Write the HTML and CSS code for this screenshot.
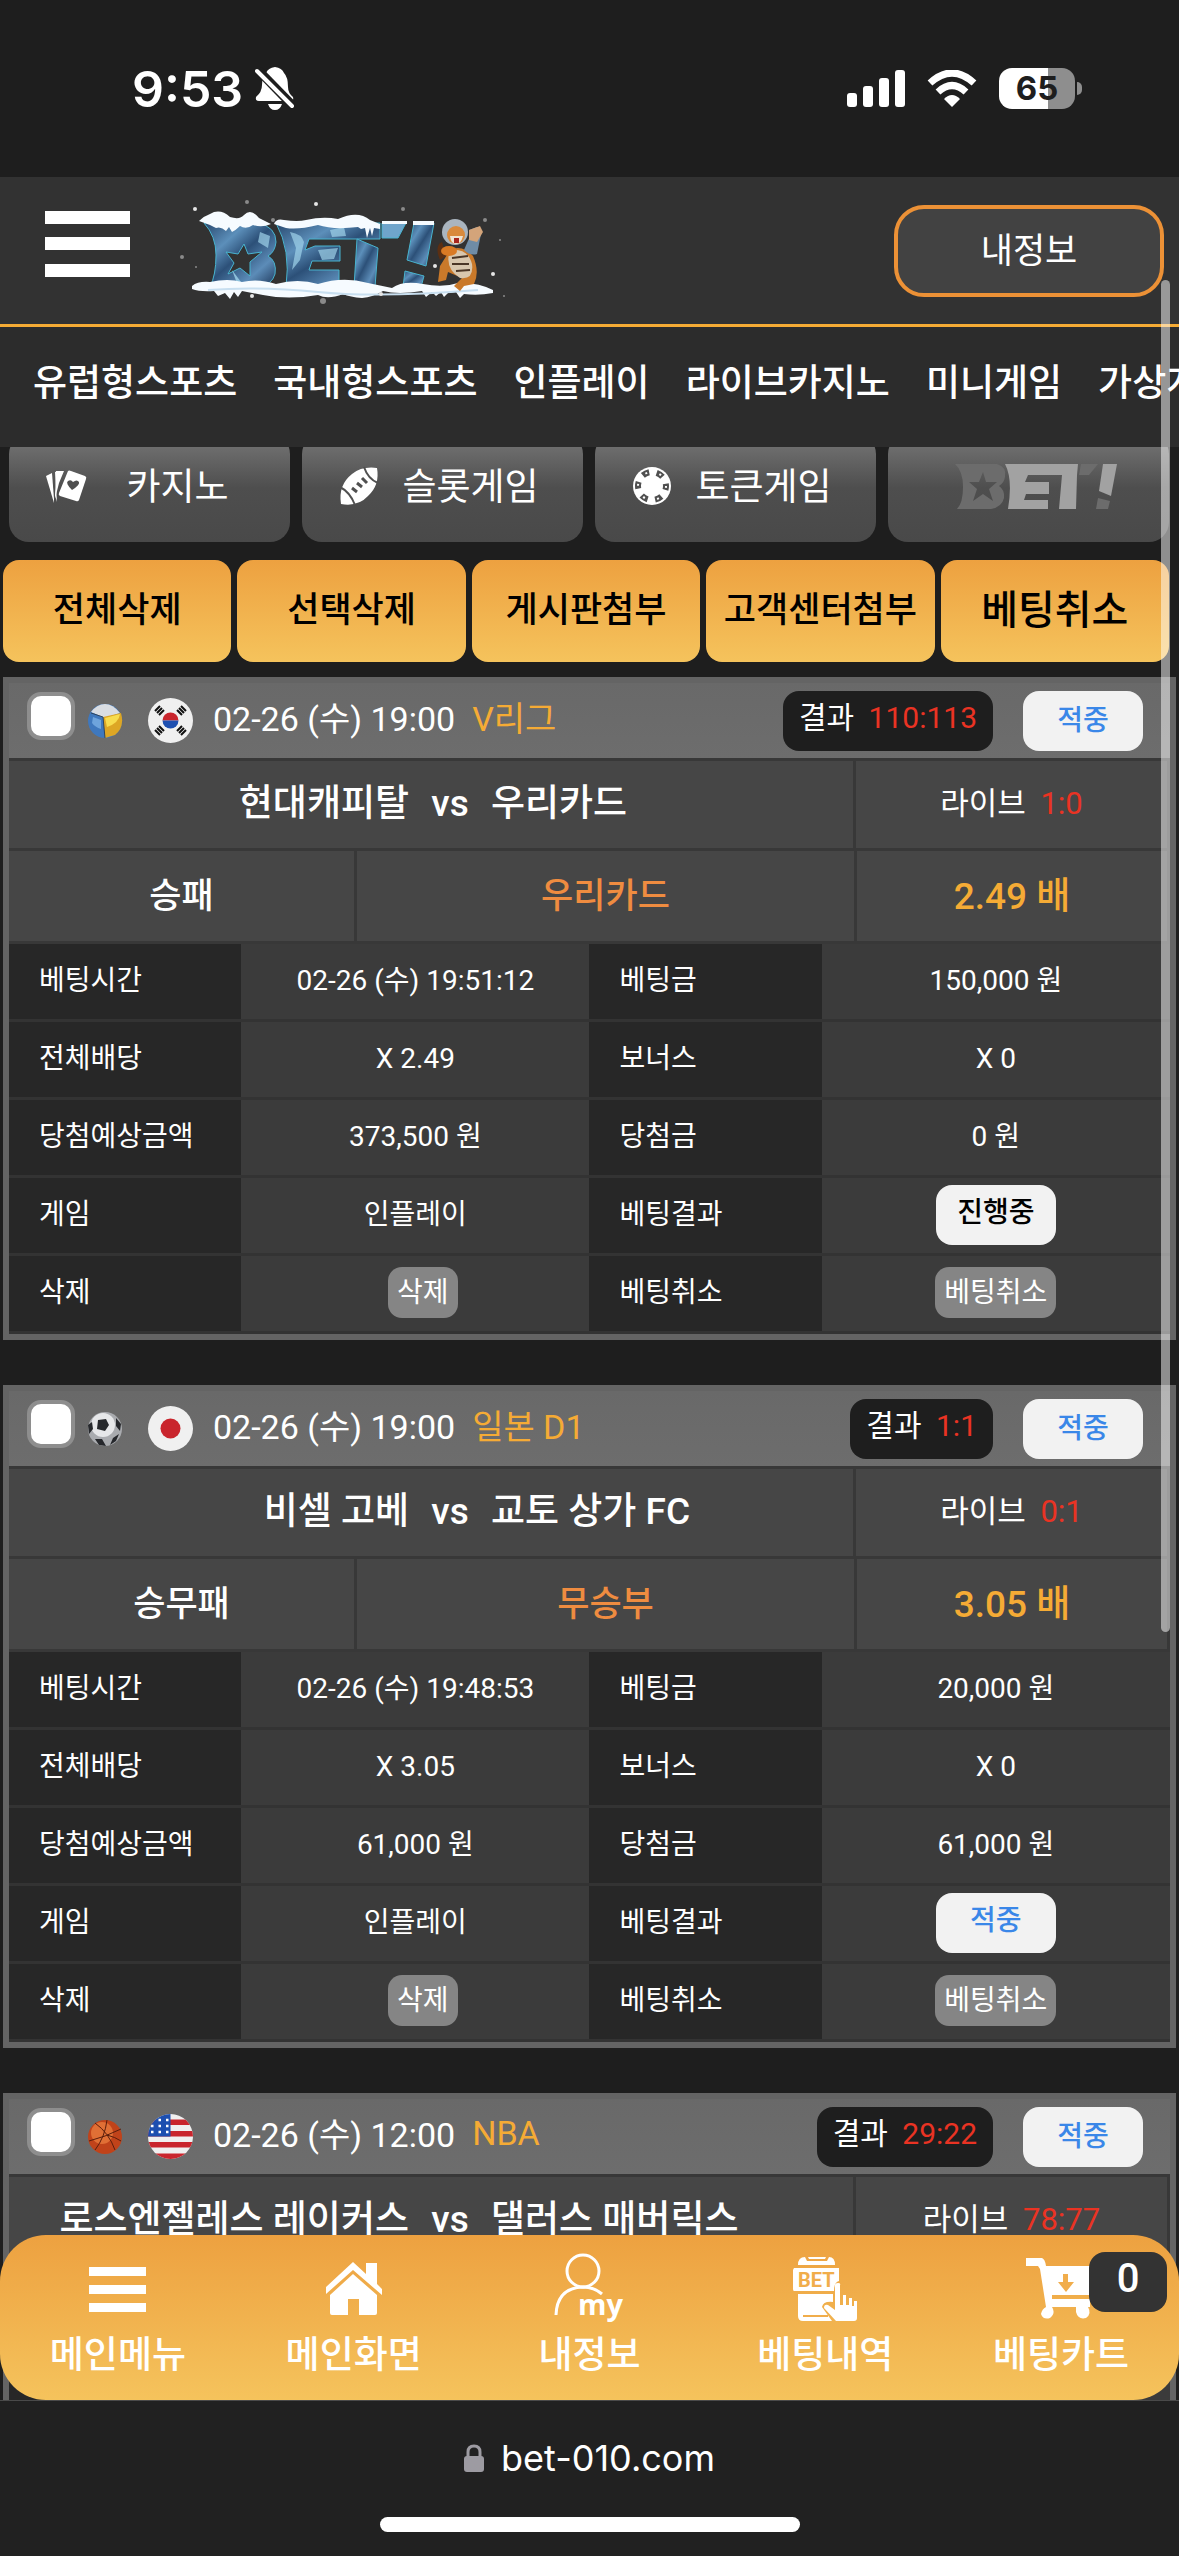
FILE: index.html
```
<!DOCTYPE html>
<html lang="ko">
<head>
    <meta charset="UTF-8">
    <meta name="viewport" content="width=device-width, initial-scale=1.0">
    <title>베팅내역</title>
    <link rel="stylesheet" href="styles.css">
</head>
<body>

    <!-- Shared icons -->
    <svg class="sprite" aria-hidden="true">
        <symbol id="ball-volley" viewBox="0 0 36 36">
            <circle cx="18" cy="18" r="17" fill="#3f78bd"/>
            <path d="M4 9Q10 1 18 1T33 10L18 15Z" fill="#d9dde2"/>
            <path d="M16 14 34 10Q38 24 28 32L18 35Z" fill="#dda624"/>
            <path d="M18 15 33 11Q32 20 20 24Z" fill="#f7dc4e"/>
            <path d="M4 10 16 14 18 35" fill="none" stroke="#2d4560" stroke-width="1"/>
            <path d="M6 14 14 17V26Q8 24 5 20Z" fill="#6ea4dc"/>
        </symbol>
        <symbol id="ball-soccer" viewBox="0 0 36 36">
            <circle cx="18" cy="18" r="17" fill="#a9abaf"/>
            <circle cx="16" cy="14" r="12" fill="#e6e7e9"/>
            <path d="M11 9 19 8 22 14 18 20 10 18ZM1 14 5 11 6 18 2 23ZM29 7 34 13 33 20 29 15ZM8 28 15 28 19 35 12 34ZM26 27 32 23 29 30 23 34Z" fill="#26282c"/>
        </symbol>
        <symbol id="ball-basket" viewBox="0 0 36 36">
            <circle cx="18" cy="18" r="17" fill="#c0431a"/>
            <circle cx="15" cy="14" r="11" fill="#e06f35"/>
            <path d="M2 22Q18 18 34 10M8 4Q22 14 28 31M20 1Q18 18 8 31M20 16Q28 18 34 22" fill="none" stroke="#5a1d0c" stroke-width="1"/>
        </symbol>
        <symbol id="flag-kr" viewBox="0 0 45 45">
            <circle cx="22.5" cy="22.5" r="22.5" fill="#f0f0f0"/>
            <path d="M14.5 22.5a8 8 0 0 1 16 0Z" fill="#c9252d"/>
            <path d="M14.5 22.5a8 8 0 0 0 16 0Z" fill="#1d4fb0"/>
            <path d="M7 13 12 8M9 15 14 10M11 17 16 12M31 10 36 15M29 12 34 17M33 8 38 13M7 32 12 37M9 30 14 35M11 28 16 33M29 33 34 28M31 35 36 30M33 37 38 32" stroke="#111" stroke-width="2"/>
        </symbol>
        <symbol id="flag-jp" viewBox="0 0 45 45">
            <circle cx="22.5" cy="22.5" r="22.5" fill="#f0f0f0"/>
            <circle cx="22.5" cy="22.5" r="10" fill="#c9252d"/>
        </symbol>
        <symbol id="flag-us" viewBox="0 0 45 45">
            <clipPath id="round"><circle cx="22.5" cy="22.5" r="22.5"/></clipPath>
            <g clip-path="url(#round)">
                <path d="M0 0H45V45H0Z" fill="#f0f0f0"/>
                <path d="M0 5.5H45V11H0ZM0 17H45V22.5H0ZM0 28H45V33.5H0ZM0 39.5H45V45H0Z" fill="#c9252d"/>
                <path d="M0 0H22.5V22.5H0Z" fill="#1d4fb0"/>
                <path d="M3 6H22M3 12H22M3 18H22" stroke="#fff" stroke-width="2.5" stroke-dasharray="2.5 5"/>
            </g>
        </symbol>
        <symbol id="bars" viewBox="0 0 57 45">
            <path d="M0 0H57V9H0ZM0 18H57V27H0ZM0 36H57V45H0Z" fill="#fff"/>
        </symbol>
    </svg>

    <!-- Phone status -->
    <div class="status">
        <div class="status-left">
            <span class="clock">9:53</span>
            <svg class="bell" viewBox="0 0 40 43">
                <path d="M20 0Q27 1 29 6 33 10 33 20 33 26 38 30 39 34 36 34H4Q0 34 1 30 7 25 7 18 7 10 11 6 13 1 20 0ZM13 37H27Q25 43 20 43T13 37Z" fill="#fff"/>
                <path d="M3 3 38 39" stroke="#1e1e1e" stroke-width="9"/>
                <path d="M2 4 37 39" stroke="#fff" stroke-width="4" stroke-linecap="round"/>
            </svg>
        </div>
        <div class="status-right">
            <svg class="signal" viewBox="0 0 58 37">
                <g fill="#fff">
                    <rect y="23" width="10" height="14" rx="3"/>
                    <rect x="16" y="16" width="10" height="21" rx="3"/>
                    <rect x="32" y="8" width="10" height="29" rx="3"/>
                    <rect x="48" width="10" height="37" rx="3"/>
                </g>
            </svg>
            <svg class="wifi" viewBox="0 0 50 37">
                <path d="M3 13Q25-7 47 13" fill="none" stroke="#fff" stroke-width="7"/>
                <path d="M11 22Q25 9 39 22" fill="none" stroke="#fff" stroke-width="7"/>
                <path d="M17 29Q25 21 33 29L25 37Z" fill="#fff"/>
            </svg>
            <span class="battery">65</span>
        </div>
    </div>

    <div class="page">
        <header class="header">
            <button class="menu-btn" aria-label="메뉴">
                <svg viewBox="0 0 85 66"><path d="M0 0H85V13H0ZM0 26H85V39H0ZM0 53H85V66H0Z" fill="#fff"/></svg>
            </button>
            <a class="logo" href="#" aria-label="BET!">
                <svg viewBox="0 0 340 110">
                    <defs>
                        <linearGradient id="ice" x1="0" y1="0" x2="1" y2="1">
                            <stop offset="0" stop-color="#27476d"/>
                            <stop offset=".3" stop-color="#5c8fba"/>
                            <stop offset=".5" stop-color="#2c5078"/>
                            <stop offset=".75" stop-color="#5c8cb8"/>
                            <stop offset="1" stop-color="#1b3355"/>
                        </linearGradient>
                    </defs>
                    <g fill="url(#ice)" stroke="#48b4cf">
                        <path d="M26 23H80Q98 27 98 42 97 52 90 56 99 61 97 74 94 85 80 87H32Q38 75 38 55 38 36 26 23ZM66 44 60 54 48 52 56 63 50 74 62 68 72 76 72 62 84 52 70 54Z" fill-rule="evenodd"/>
                        <path d="M98 23H202V39H131L127 50 137 46H162V61H134L131 70H161V87H108Q113 50 98 23Z"/>
                        <path d="M179 39 200 48 197 87H176Z"/>
                        <path d="M204 23H228L220 38H204Z" fill="#6fa5cc"/>
                        <path d="M236 23H256L248 66 229 60Z"/>
                        <path d="M227 71 246 76 243 87H225Z"/>
                    </g>
                    <g fill="#9fd3ea">
                        <path d="M112 32Q124 34 126 42L122 60 114 70 118 48Z" opacity=".7"/>
                        <path d="M140 50 160 48 156 59 144 60ZM152 30 166 27 168 36 154 37ZM82 32 92 36 90 48 80 42Z" opacity=".7"/>
                        <path d="M54 70 66 86H60Z" opacity=".8"/>
                    </g>
                    <g fill="#f6fbff">
                        <path d="M21 21Q26 16 32 14 42 8 52 17 62 20 66 15 73 8 81 18L93 24Q84 28 75 25 68 30 62 26 58 30 54 32L51 27 48 31Q43 26 38 28L32 25Z"/>
                        <path d="M96 24Q98 18 106 20 120 22 128 20 145 16 160 19 180 10 192 20L202 24V29L196 28 194 36 192 28 189 38 187 28 183 29 180 27Q155 30 140 25 120 30 108 28Z"/>
                        <path d="M14 86Q20 81 32 82 50 78 64 82 80 78 98 84 120 78 140 84 165 76 190 83L214 88Q225 80 245 84 265 88 280 83 300 82 315 90V93Q300 96 286 94L282 98 278 92 270 93 266 97 263 92 258 96 254 92 248 97 244 91Q220 95 205 91 195 97 184 98 172 97 165 94 150 100 140 95 110 100 85 95L64 91 60 97 56 92 52 99 47 93 40 96 36 91Q22 92 14 89Z"/>
                        <path d="M204 21H229V24H204ZM235 21H256V25H235Z"/>
                    </g>
                    <path d="M30 90Q80 86 140 92T300 90" fill="none" stroke="#c8dff0" stroke-width="2"/>
                    <!-- tiger -->
                    <path d="M262 60Q256 46 264 42L268 56Z" fill="#5b2f12"/>
                    <path d="M272 50Q284 44 295 56 302 72 296 84L286 86 282 91 276 86 284 78 270 72 268 80 260 82 262 66Z" fill="#c9792a"/>
                    <path d="M272 50Q290 48 294 64 296 80 282 78 266 68 272 50Z" fill="#d8c7ae"/>
                    <path d="M274 58 290 56M274 64 291 64M278 71 292 70" stroke="#4a3626" stroke-width="2"/>
                    <circle cx="277" cy="32" r="13" fill="#aab5bf"/>
                    <circle cx="278" cy="35" r="9" fill="#d98a3c"/>
                    <path d="M272 36H285Q283 44 278 44T272 36Z" fill="#f0e4d2"/>
                    <path d="M276 38H281V43H276Z" fill="#a8261e"/>
                    <path d="M286 50 293 34 291 30 299 27 303 34 299 54Q292 56 286 50Z" fill="#6f8ca6"/>
                    <path d="M291 30 302 26 305 32 299 42 291 40Z" fill="#d3a47a"/>
                    <ellipse cx="271" cy="51" rx="8" ry="5" fill="#d97a24"/>
                    <g fill="#e6e6e6">
                        <circle cx="17" cy="9" r="2"/><circle cx="138" cy="4" r="2"/><circle cx="257" cy="66" r="2"/><circle cx="315" cy="74" r="2"/><circle cx="74" cy="96" r="2"/><circle cx="203" cy="94" r="2"/>
                    </g>
                    <g fill="#8a8a8a">
                        <circle cx="69" cy="2" r="2"/><circle cx="225" cy="9" r="2"/><circle cx="307" cy="20" r="2"/><circle cx="322" cy="40" r="1"/><circle cx="4" cy="57" r="2"/><circle cx="18" cy="67" r="1"/><circle cx="145" cy="101" r="3"/><circle cx="326" cy="96" r="1"/><circle cx="95" cy="20" r="2"/>
                    </g>
                </svg>
            </a>
            <button class="my-btn">내정보</button>
        </header>

        <nav class="nav">
            <a href="#">유럽형스포츠</a>
            <a href="#">국내형스포츠</a>
            <a href="#">인플레이</a>
            <a href="#">라이브카지노</a>
            <a href="#">미니게임</a>
            <a href="#">가상게임</a>
        </nav>

        <main class="content">
            <div class="quick">
                <a class="quick-btn" href="#">
                    <svg class="quick-icon" viewBox="0 0 42 42">
                        <g fill="#fff">
                            <path d="M1 11 7 8 9 34 9 38Z"/>
                            <path d="M10 7 14 6 10 30 12 37Z"/>
                            <path d="M11 6 19 6 14 18 10 34Z"/>
                            <path d="M23 6Q24 5 26 6L40 11Q42 12 41 14L34 35Q33 37 31 36L15 31Q13 30 14 28Z"/>
                        </g>
                        <path d="M27 25Q20 18 23 16 26 14 28 17 32 14 34 17 35 20 27 25Z" fill="#4f4f4f"/>
                    </svg>
                    <span>카지노</span>
                </a>
                <a class="quick-btn" href="#">
                    <svg class="quick-icon" viewBox="0 0 42 42">
                        <path d="M3 39Q0 20 14 9 24 1 39 3 42 20 30 31 20 42 3 39Z" fill="#fff"/>
                        <path d="M2 22Q12 27 17 40M26 2Q30 14 40 18" fill="none" stroke="#505050" stroke-width="2"/>
                        <path d="M14 23 19 27M19 18 24 22M24 13 29 18" stroke="#505050" stroke-width="3"/>
                    </svg>
                    <span>슬롯게임</span>
                </a>
                <a class="quick-btn" href="#">
                    <svg class="quick-icon" viewBox="0 0 42 42">
                        <circle cx="21" cy="21" r="19" fill="#fff"/>
                        <circle cx="21" cy="21" r="14" fill="none" stroke="#505050" stroke-width="6" stroke-dasharray="7 7.66" stroke-dashoffset="3"/>
                        <circle cx="21" cy="21" r="14" fill="none" stroke="#fff" stroke-width="2" stroke-dasharray="2 12.66" stroke-dashoffset="0"/>
                    </svg>
                    <span>토큰게임</span>
                </a>
                <a class="quick-btn" href="#" aria-label="BET!">
                    <svg class="quick-logo" viewBox="0 0 162 46">
                        <path d="M0 1H42Q52 4 50 14 49 20 44 23 50 27 49 35 47 44 36 46H2Q8 40 8 24 8 8 0 1ZM28 9 24 19 14 19 22 26 18 38 28 31 38 38 34 26 42 19 31 19Z" fill="#6c6c6c" fill-rule="evenodd"/>
                        <path d="M50 1H123L122 12 121 46H104L107 12H73L70 19H94V31H71L69 37H93V46H53Q58 16 50 1Z" fill="#a2a2a2"/>
                        <path d="M126 1H143L134 12H124Z" fill="#6c6c6c"/>
                        <path d="M148 1H162L156 33 144 28Z" fill="#a2a2a2"/>
                        <path d="M143 35 155 38 153 46H141Z" fill="#6c6c6c"/>
                    </svg>
                </a>
            </div>

            <div class="actions">
                <button>전체삭제</button>
                <button>선택삭제</button>
                <button>게시판첨부</button>
                <button>고객센터첨부</button>
                <button class="strong">베팅취소</button>
            </div>

            <article class="bet">
                <div class="bet-head">
                    <input type="checkbox" aria-label="V리그 선택">
                    <svg class="ball"><use href="#ball-volley"/></svg>
                    <svg class="flag"><use href="#flag-kr"/></svg>
                    <span class="date">02-26 (수) 19:00</span>
                    <span class="league">V리그</span>
                    <span class="result">결과 <b>110:113</b></span>
                    <button class="state hit">적중</button>
                </div>
                <div class="bet-row match">
                    <div class="teams"><span>현대캐피탈</span><span>vs</span><span>우리카드</span></div>
                    <div class="live">라이브 <b>1:0</b></div>
                </div>
                <div class="bet-row pick">
                    <div>승패</div>
                    <div class="choice">우리카드</div>
                    <div class="odds">2.49 배</div>
                </div>
                <table class="detail">
                    <tr><th>베팅시간</th><td>02-26 (수) 19:51:12</td><th>베팅금</th><td>150,000 원</td></tr>
                    <tr><th>전체배당</th><td>X 2.49</td><th>보너스</th><td>X 0</td></tr>
                    <tr><th>당첨예상금액</th><td>373,500 원</td><th>당첨금</th><td>0 원</td></tr>
                    <tr><th>게임</th><td>인플레이</td><th>베팅결과</th><td><button class="state">진행중</button></td></tr>
                    <tr><th>삭제</th><td class="delete"><button class="small">삭제</button></td><th>베팅취소</th><td><button class="small">베팅취소</button></td></tr>
                </table>
            </article>

            <article class="bet">
                <div class="bet-head">
                    <input type="checkbox" aria-label="일본 D1 선택">
                    <svg class="ball"><use href="#ball-soccer"/></svg>
                    <svg class="flag"><use href="#flag-jp"/></svg>
                    <span class="date">02-26 (수) 19:00</span>
                    <span class="league">일본 D1</span>
                    <span class="result">결과 <b>1:1</b></span>
                    <button class="state hit">적중</button>
                </div>
                <div class="bet-row match">
                    <div class="teams"><span>비셀 고베</span><span>vs</span><span>교토 상가 FC</span></div>
                    <div class="live">라이브 <b>0:1</b></div>
                </div>
                <div class="bet-row pick">
                    <div>승무패</div>
                    <div class="choice">무승부</div>
                    <div class="odds">3.05 배</div>
                </div>
                <table class="detail">
                    <tr><th>베팅시간</th><td>02-26 (수) 19:48:53</td><th>베팅금</th><td>20,000 원</td></tr>
                    <tr><th>전체배당</th><td>X 3.05</td><th>보너스</th><td>X 0</td></tr>
                    <tr><th>당첨예상금액</th><td>61,000 원</td><th>당첨금</th><td>61,000 원</td></tr>
                    <tr><th>게임</th><td>인플레이</td><th>베팅결과</th><td><button class="state hit">적중</button></td></tr>
                    <tr><th>삭제</th><td class="delete"><button class="small">삭제</button></td><th>베팅취소</th><td><button class="small">베팅취소</button></td></tr>
                </table>
            </article>

            <article class="bet">
                <div class="bet-head">
                    <input type="checkbox" aria-label="NBA 선택">
                    <svg class="ball"><use href="#ball-basket"/></svg>
                    <svg class="flag"><use href="#flag-us"/></svg>
                    <span class="date">02-26 (수) 12:00</span>
                    <span class="league">NBA</span>
                    <span class="result">결과 <b>29:22</b></span>
                    <button class="state hit">적중</button>
                </div>
                <div class="bet-row match">
                    <div class="teams"><span>로스엔젤레스 레이커스</span><span>vs</span><span>댈러스 매버릭스</span></div>
                    <div class="live">라이브 <b>78:77</b></div>
                </div>
                <div class="bet-row pick">
                    <div></div>
                    <div class="choice"></div>
                    <div class="odds"></div>
                </div>
                <table class="detail">
                    <tr><th></th><td></td><th></th><td></td></tr>
                </table>
            </article>
        </main>

        <!-- Bottom tabs -->
        <nav class="tabbar">
            <a href="#">
                <span class="tab-icon"><svg width="57" height="45"><use href="#bars"/></svg></span>
                메인메뉴
            </a>
            <a href="#">
                <span class="tab-icon"><svg width="56" height="54" viewBox="0 0 56 54">
                    <path d="M27 0 40 12V1H51V22L56 27V33L27 8 0 32V25Z" fill="#fff"/>
                    <path d="M27 12 51 33V51Q51 53 49 53H33V37H22V53H6Q4 53 4 51V33Z" fill="#fff"/>
                </svg></span>
                메인화면
            </a>
            <a href="#">
                <span class="tab-icon"><svg width="70" height="72" viewBox="0 0 70 72">
                    <circle cx="29" cy="18" r="16" fill="none" stroke="#fff" stroke-width="3"/>
                    <path d="M2 62Q3 35 29 34 40 34 48 41" fill="none" stroke="#fff" stroke-width="3"/>
                    <text class="my-text" x="24" y="62">my</text>
                </svg></span>
                내정보
            </a>
            <a href="#">
                <span class="tab-icon"><svg width="64" height="66" viewBox="0 0 64 66">
                    <path d="M5 9Q5 1 12 1L14 5H34L36 1Q42 1 42 9ZM15 1H33L32 3H16ZM1 12H46V25Q41 26 41 35H1Q0 35 0 33V14ZM5 38H40V46Q30 45 29 51L39 65H10Q5 65 5 60Z" fill="#fff"/>
                    <path d="M10 60H35" stroke="#f1ad4b" stroke-width="2"/>
                    <path d="M42 29Q42 27 45 27T47 29V49H50V39H53V49H56V42H59V50H61V45H64V62Q64 65 61 65H43L31 52Q31 48 35 49L42 54Z" fill="#fff"/>
                    <text class="bet-text" x="5" y="31">BET</text>
                </svg></span>
                베팅내역
            </a>
            <a href="#">
                <span class="tab-icon"><svg width="70" height="64" viewBox="0 0 70 64">
                    <path d="M0 1H16Q19 2 20 9H70L64 38H26V42H64V50H26Q30 56 24 61 17 63 15 57 16 52 20 50L14 12 12 9H0Z" fill="#fff"/>
                    <path d="M50 50H62Q66 57 60 61 52 63 50 55Z" fill="#fff"/>
                    <path d="M37 17H42V25H48L40 35 32 25H37Z" fill="#f1ad4b"/>
                </svg></span>
                베팅카트
                <span class="count">0</span>
            </a>
        </nav>
    </div>

    <!-- Browser address -->
    <footer class="browser">
        <div class="address">
            <svg width="20" height="28" viewBox="0 0 20 28">
                <path d="M4 13V8Q4 2 10 2T16 8V13" fill="none" stroke="#9d9ba2" stroke-width="3"/>
                <rect y="12" width="20" height="16" rx="3" fill="#9d9ba2"/>
            </svg>
            bet-010.com
        </div>
        <div class="home-line"></div>
    </footer>

    <div class="scroll-thumb"></div>

</body>
</html>
```
FILE: styles.css
```
* {
    box-sizing: border-box;
}

body {
    margin: 0;
    height: 100vh;
    display: flex;
    flex-direction: column;
    overflow: hidden;
    position: relative;
    background-color: #1e1e1e;
    color: #fff;
    font-family: Roboto, 'Noto Sans CJK KR', sans-serif;
    font-size: 28px;
}

a {
    color: inherit;
    text-decoration: none;
}

button {
    border: 0;
    padding: 0;
    background: none;
    color: inherit;
    font: inherit;
    cursor: pointer;
}

svg {
    display: block;
}

b {
    font-weight: 400;
}

.sprite {
    position: absolute;
    width: 0;
    height: 0;
}

/* Phone status */
.status {
    flex: none;
    display: flex;
    justify-content: space-between;
    align-items: center;
    height: 177px;
    padding: 0 98px 0 132px;
    font-family: Inter, sans-serif;
    font-weight: 600;
}

.status-left,
.status-right {
    display: flex;
    align-items: center;
}

.status-left {
    gap: 12px;
}

.status-right {
    gap: 22px;
}

.clock {
    font-size: 50px;
    line-height: 60px;
}

.bell {
    width: 40px;
    height: 43px;
}

.signal {
    width: 58px;
    height: 37px;
}

.wifi {
    width: 50px;
    height: 37px;
}

.battery {
    position: relative;
    width: 76px;
    height: 41px;
    margin-right: 6px;
    border-radius: 13px;
    background: linear-gradient(to right, #fff 65%, #8e8e8e 65%);
    color: #1e1e1e;
    font-size: 33px;
    font-weight: 700;
    line-height: 41px;
    text-align: center;
}

.battery::after {
    content: '';
    position: absolute;
    left: 78px;
    top: 14px;
    width: 5px;
    height: 13px;
    border-radius: 0 5px 5px 0;
    background-color: #8e8e8e;
}

/* Page */
.page {
    flex: 1;
    min-height: 0;
    display: flex;
    flex-direction: column;
    position: relative;
    border-bottom: 1px solid #4a4a4a;
}

.header {
    flex: none;
    display: flex;
    align-items: center;
    height: 150px;
    padding: 0 15px 0 45px;
    background-color: #323232;
    border-bottom: 3px solid #f5ab35;
}

.menu-btn {
    margin-bottom: 14px;
}

.menu-btn svg {
    width: 85px;
    height: 66px;
}

.logo {
    margin: 8px 0 0 48px;
}

.logo svg {
    width: 340px;
    height: 110px;
}

.my-btn {
    width: 270px;
    height: 92px;
    margin-left: auto;
    padding-bottom: 6px;
    border: 4px solid #ec9136;
    border-radius: 30px;
    background-color: #424242;
    font-size: 35px;
}

.nav {
    flex: none;
    display: flex;
    gap: 36px;
    height: 120px;
    padding-left: 33px;
    overflow: hidden;
    background-color: #2c2c2c;
    font-size: 37px;
    font-weight: 500;
    line-height: 114px;
    white-space: nowrap;
}

.content {
    flex: 1;
    min-height: 0;
    overflow: hidden;
}

.quick {
    display: grid;
    grid-template-columns: repeat(4, 1fr);
    gap: 12px;
    margin-top: -13px;
    padding: 0 10px 0 9px;
}

.quick-btn {
    display: flex;
    align-items: center;
    justify-content: center;
    height: 108px;
    padding: 0 22px 4px 36px;
    border-radius: 20px;
    background: linear-gradient(#777 0%, #4e4e4e 50%, #494949 100%);
    font-size: 37px;
}

.quick-btn span {
    flex: 1;
    padding-bottom: 4px;
    text-align: center;
}

.quick-icon {
    width: 42px;
    height: 42px;
}

.quick-logo {
    width: 162px;
    height: 46px;
}

.actions {
    display: grid;
    grid-template-columns: repeat(5, 1fr);
    gap: 6px;
    margin: 18px 10px 15px 3px;
}

.actions button {
    height: 102px;
    padding-bottom: 9px;
    border-radius: 16px;
    background: linear-gradient(#eda140, #f5c35c);
    color: #000;
    font-size: 35px;
    font-weight: 500;
    white-space: nowrap;
}

.actions .strong {
    font-size: 40px;
}

/* Bet card */
.bet {
    margin: 0 3px 45px;
    border: 6px solid #646464;
    background-color: #383838;
}

.bet-head {
    display: flex;
    align-items: center;
    height: 75px;
    padding: 0 27px 0 18px;
    background: linear-gradient(#696969, #6d6d6d);
    font-size: 34px;
}

.bet-head input {
    appearance: none;
    width: 48px;
    height: 48px;
    margin: 0 12px 9px 0;
    border: 4px solid #8e8e8e;
    border-radius: 14px;
    background-color: #fff;
}

.ball {
    width: 36px;
    height: 36px;
    margin-right: 25px;
}

.flag {
    width: 45px;
    height: 45px;
    margin-right: 20px;
}

.date,
.league {
    padding-bottom: 8px;
}

.league {
    margin-left: 17px;
    color: #f5ab35;
}

.result {
    height: 60px;
    margin-left: auto;
    padding: 0 16px;
    border-radius: 16px;
    background-color: #1e1e1e;
    font-size: 30px;
    line-height: 54px;
}

.result b,
.live b {
    margin-left: 7px;
    color: #ea3323;
}

.state {
    width: 120px;
    height: 60px;
    padding-bottom: 3px;
    border-radius: 16px;
    background-color: #f2f2f2;
    color: #000;
    font-weight: 500;
    vertical-align: middle;
}

.hit {
    color: #3a87e8;
}

.bet-head .state {
    margin-left: 30px;
    padding-bottom: 5px;
    font-size: 28px;
}

.bet-row {
    display: grid;
    gap: 3px;
    margin: 3px 3px 3px 0;
    text-align: center;
}

.bet-row > div {
    height: 90px;
    background-color: #464646;
    font-size: 35px;
    font-weight: 500;
    line-height: 92px;
    white-space: nowrap;
}

.match {
    grid-template-columns: 844fr 311fr;
}

.match > div {
    height: 87px;
    line-height: 86px;
}

.bet-row .teams {
    display: grid;
    grid-template-columns: 400fr 82px 362fr;
    font-size: 37px;
}

.teams span:first-child {
    text-align: right;
}

.teams span:last-child {
    text-align: left;
}

.bet-row .live {
    font-size: 31px;
    font-weight: 400;
}

.pick {
    grid-template-columns: 345fr 497fr 310fr;
}

.pick .choice {
    color: #ef8c40;
}

.pick .odds {
    color: #f5ab35;
    font-size: 37px;
}

.detail {
    width: 100%;
    table-layout: fixed;
    border-spacing: 0;
}

.detail th,
.detail td {
    height: 78px;
    padding: 0 0 2px;
    border-bottom: 3px solid #333;
    font-weight: 400;
    line-height: 36px;
    white-space: nowrap;
}

.detail th {
    width: 20%;
    padding-left: 30px;
    background-color: #272727;
    text-align: left;
}

.detail td {
    width: 30%;
    background-color: #3b3b3b;
    text-align: center;
}

.detail .delete {
    padding-left: 15px;
}

.small {
    height: 51px;
    padding: 0 9px;
    border-radius: 14px;
    background-color: #858585;
    vertical-align: middle;
}

/* Bottom tabs */
.tabbar {
    position: absolute;
    left: 0;
    right: 0;
    bottom: 0;
    display: grid;
    grid-template-columns: repeat(5, 1fr);
    height: 165px;
    border-radius: 46px;
    background: linear-gradient(#eda140, #f5c35c);
    font-size: 37px;
    font-weight: 500;
    line-height: 54px;
}

.tabbar a {
    position: relative;
    display: flex;
    flex-direction: column;
    align-items: center;
    padding-top: 14px;
}

.tab-icon {
    display: flex;
    align-items: center;
    height: 80px;
}

.my-text {
    fill: #fff;
    font-family: 'Open Sans', sans-serif;
    font-size: 29px;
    font-weight: 700;
}

.bet-text {
    fill: #f1ad4b;
    font-family: Roboto, sans-serif;
    font-size: 20px;
    font-weight: 700;
}

.count {
    position: absolute;
    top: 17px;
    right: 12px;
    width: 78px;
    height: 60px;
    border-radius: 16px;
    background-color: #333;
    font-size: 40px;
    line-height: 54px;
    text-align: center;
}

/* Browser address */
.browser {
    flex: none;
    height: 155px;
    padding-top: 34px;
    background-color: #212121;
}

.address {
    display: flex;
    justify-content: center;
    align-items: center;
    gap: 17px;
    font-family: Inter, sans-serif;
    font-size: 36px;
    line-height: 46px;
}

.home-line {
    width: 420px;
    height: 15px;
    margin: 36px auto 0;
    border-radius: 8px;
    background-color: #fff;
}

.scroll-thumb {
    position: absolute;
    top: 280px;
    right: 9px;
    width: 9px;
    height: 1352px;
    border-radius: 5px;
    background-color: rgba(255, 255, 255, 0.5);
}
```
